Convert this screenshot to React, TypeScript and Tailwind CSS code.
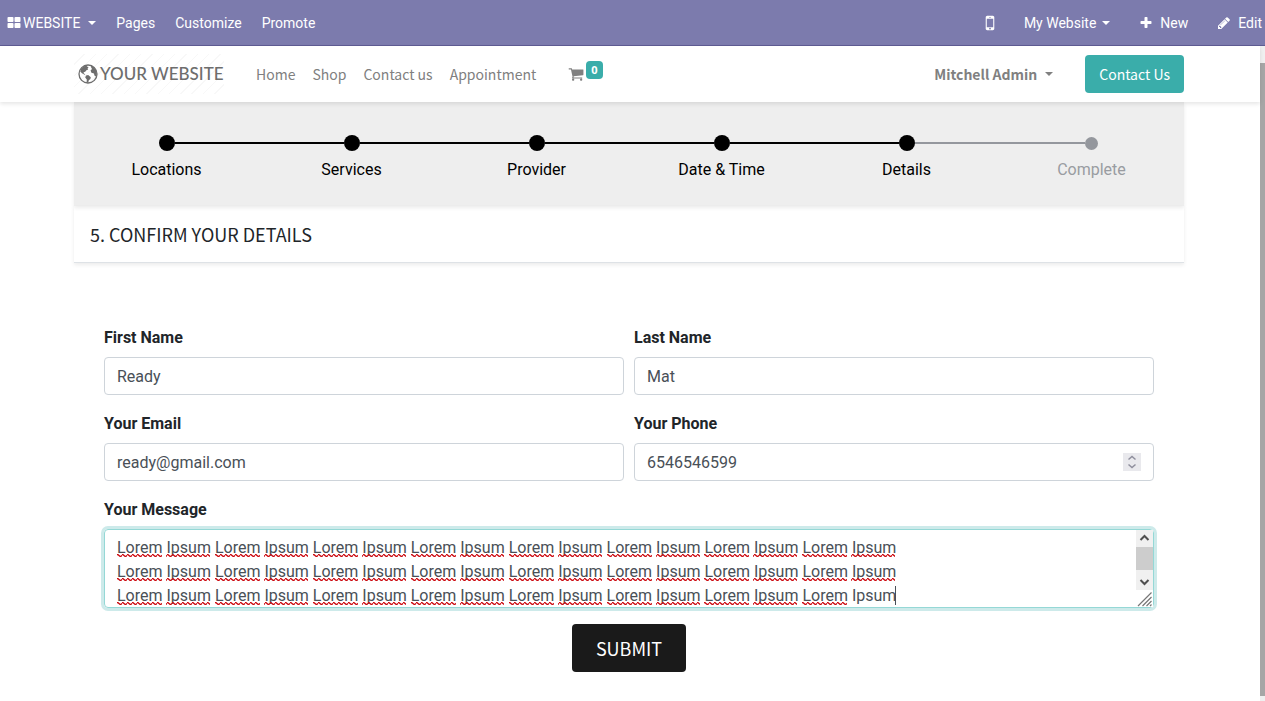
import React from "react";

const Icon = ({ d, className, box = "0 0 1792 1792" }: { d: string; className: string; box?: string }) => (
  <svg aria-hidden="true" viewBox={box} className={className} fill="currentColor">
    <path d={d} />
  </svg>
);

const thLarge =
  "M832 1024v384q0 52-38 90t-90 38h-512q-52 0-90-38t-38-90v-384q0-52 38-90t90-38h512q52 0 90 38t38 90zm0-768v384q0 52-38 90t-90 38h-512q-52 0-90-38t-38-90v-384q0-52 38-90t90-38h512q52 0 90 38t38 90zm896 768v384q0 52-38 90t-90 38h-512q-52 0-90-38t-38-90v-384q0-52 38-90t90-38h512q52 0 90 38t38 90zm0-768v384q0 52-38 90t-90 38h-512q-52 0-90-38t-38-90v-384q0-52 38-90t90-38h512q52 0 90 38t38 90z";
const mobile =
  "M976 1408q0-33-23.5-56.5t-56.5-23.5-56.5 23.5-23.5 56.5 23.5 56.5 56.5 23.5 56.5-23.5 23.5-56.5zm208-160v-704q0-13-9.5-22.5t-22.5-9.5h-512q-13 0-22.5 9.5t-9.5 22.5v704q0 13 9.5 22.5t22.5 9.5h512q13 0 22.5-9.5t9.5-22.5zm-192-848q0-16-16-16h-160q-16 0-16 16t16 16h160q16 0 16-16zm288-16v1024q0 52-38 90t-90 38h-512q-52 0-90-38t-38-90v-1024q0-52 38-90t90-38h512q52 0 90 38t38 90z";
const plus =
  "M1600 736v192q0 40-28 68t-68 28h-416v416q0 40-28 68t-68 28h-192q-40 0-68-28t-28-68v-416h-416q-40 0-68-28t-28-68v-192q0-40 28-68t68-28h416v-416q0-40 28-68t68-28h192q40 0 68 28t28 68v416h416q40 0 68 28t28 68z";
const pencil =
  "M491 1536l91-91-235-235-91 91v107h128v128h107zm523-928q0-22-22-22-10 0-17 7l-542 542q-7 7-7 17 0 22 22 22 10 0 17-7l542-542q7-7 7-17zm-54-192l416 416-832 832h-416v-416zm683 96q0 53-37 90l-166 166-416-416 166-165q36-38 90-38 53 0 91 38l235 234q37 39 37 91z";
const cart =
  "M704 1536q0 52-38 90t-90 38-90-38-38-90 38-90 90-38 90 38 38 90zm896 0q0 52-38 90t-90 38-90-38-38-90 38-90 90-38 90 38 38 90zm128-1088v512q0 24-16.5 42.5t-40.5 21.5l-1044 122q13 60 13 70 0 16-24 64h920q26 0 45 19t19 45-19 45-45 19h-1024q-26 0-45-19t-19-45q0-11 8-31.5t16-36 21.5-40 15.5-29.5l-177-823h-204q-26 0-45-19t-19-45 19-45 45-19h256q16 0 28.5 6.5t19.5 15.5 13 24.5 8 26 5.5 29.5 4.5 26h1201q26 0 45 19t19 45z";

const Caret = () => (
  <svg aria-hidden="true" viewBox="0 0 8 4" className="h-1 w-2" fill="currentColor">
    <path d="M0 0h8L4 4z" />
  </svg>
);

const Globe = () => (
  <svg aria-hidden="true" viewBox="0 0 20 20" className="size-5 shrink-0" fill="currentColor">
    <circle cx="10" cy="10" r="9" fill="none" stroke="currentColor" strokeWidth="1.3" />
    <path d="M3.200 4.600 6 2.200 9.400 1.300 8.800 2.600 10.600 3 9.600 4.400 10.200 5.600 8.400 6.200 7.200 7.800 5.600 8.200 5.800 9.400 7.400 10.200 6.600 10.800 4 9.200 2.200 7.400z" />
    <path d="M12.600 1.600 15.800 3 18.200 6.400 18.900 10 17.800 12.600 16.400 11.400 16 9.400 13.400 8.800 12.600 6.600 14 5 13.200 3.600z" />
    <path d="M8 11.400 10.200 11 12.800 13.200 12.400 15 10.800 16.200 10.200 18.800 8.600 18.400 8.800 15.400 7.200 13.600z" />
  </svg>
);

const steps = ["Locations", "Services", "Provider", "Date & Time", "Details", "Complete"];
const current = 4;

const Stepper = () => (
  <ol className="grid h-26 grid-cols-6 bg-[#eee] pt-[33px] text-base shadow-[0_2px_4px_rgba(0,0,0,0.08)]">
    {steps.map((step, i) => (
      <li key={step} className={i <= current ? "text-black" : "text-[#999ca1]"}>
        <div className="flex h-4 items-center">
          <span className={`h-0.5 flex-1 ${i === 0 ? "" : i <= current ? "bg-black" : "bg-[#94979d]"}`} />
          <span className={i <= current ? "size-4 rounded-full bg-black" : "size-[13px] rounded-full bg-[#94979d]"} />
          <span
            className={`h-0.5 flex-1 ${i === steps.length - 1 ? "" : i < current ? "bg-black" : "bg-[#94979d]"}`}
          />
        </div>
        <div className="mt-[7px] text-center leading-6">{step}</div>
      </li>
    ))}
  </ol>
);

const control =
  "block w-full rounded border border-[#ced4da] bg-white px-3 text-base leading-6 text-[#495057] outline-none";

const Field = ({ id, label, children }: { id: string; label: string; children: React.ReactNode }) => (
  <div>
    <label htmlFor={id} className="mb-[7px] block font-bold leading-6">
      {label}
    </label>
    {children}
  </div>
);

const message = Array(3).fill(Array(8).fill("Lorem Ipsum").join(" ")).join("\n");

const SpellingMarks = () => (
  <svg
    aria-hidden="true"
    className="pointer-events-none absolute left-[13px] top-[25px] h-14 w-[790px]"
  >
    <defs>
      <pattern id="wave" width="5" height="24" patternUnits="userSpaceOnUse">
        <path d="M-1 1.500 0 .7h1L3 2.300h1L6 .7" fill="none" stroke="#cc0a10" strokeWidth="1.300" />
      </pattern>
    </defs>
    {[0, 1, 2].map((line) =>
      Array.from({ length: 8 }, (_, i) => (
        <g key={`${line}-${i}`} transform={`translate(${Math.round(i * 97.9)} ${line * 24})`} fill="url(#wave)">
          <rect width="45" height="3" />
          {!(line === 2 && i === 7) && <rect x="49" width="44" height="3" />}
        </g>
      )),
    )}
  </svg>
);

const TextScroll = () => (
  <div aria-hidden="true" className="absolute right-px top-px flex h-[77px] w-[17px] flex-col bg-white">
    <svg viewBox="0 0 17 17" className="h-[17px] bg-[#f0f0f0]" fill="none" stroke="#505050" strokeWidth="2">
      <path d="m4.500 10 4-4 4 4" />
    </svg>
    <div className="h-[23px] bg-[#cdcdcd]" />
    <svg viewBox="0 0 17 20" className="h-5 bg-[#f0f0f0]" fill="none" stroke="#505050" strokeWidth="2">
      <path d="m4.500 10 4 4 4-4" />
    </svg>
    <svg viewBox="0 0 17 17" className="h-[17px]" fill="none" stroke="#777" strokeWidth="1.2">
      <path d="M2 16 15.500 2.500M6.500 16l9-9M10.500 16l5-5M14 16l1.500-1.500" />
    </svg>
  </div>
);

export default function App() {
  return (
    <div className="flex min-h-screen flex-col bg-white font-['Roboto',sans-serif] text-[#212529]">
      <nav className="flex h-[46px] items-center justify-between border-b border-[#5f5c93] bg-[#7c7bad] pl-[7px] pr-[3px] text-sm text-white">
        <div className="flex items-center gap-5">
          <button className="flex items-center">
            <Icon d={thLarge} className="mr-0.5 h-3.5 w-3.5" />
            WEBSITE
            <span className="ml-2">
              <Caret />
            </span>
          </button>
          <a href="#pages">Pages</a>
          <a href="#customize">Customize</a>
          <a href="#promote">Promote</a>
        </div>
        <div className="flex items-center">
          <button aria-label="Mobile preview" className="mr-6">
            <Icon d={mobile} className="size-5" />
          </button>
          <button className="mr-[29px] flex items-center gap-1.5">
            My Website <Caret />
          </button>
          <button className="mr-[29px] flex items-center gap-[7px]">
            <Icon d={plus} className="size-3.5" /> New
          </button>
          <button className="flex items-center gap-[7px]">
            <Icon d={pencil} className="size-3.5" /> Edit
          </button>
        </div>
      </nav>

      <div className="flex flex-1">
        <div className="min-w-0 flex-1">
          <header className="relative h-14 bg-white pr-0.5 shadow-[0_2px_4px_rgba(0,0,0,0.1)]">
            <div className="mx-auto flex h-full max-w-[1110px] items-center font-['Noto_Sans_CJK_SC',sans-serif] text-sm leading-6 text-[#808080]">
              <a
                href="#home"
                className="mr-8 flex h-10 w-[150px] items-center bg-[repeating-linear-gradient(135deg,#fff_0_7px,#f8f8f8_7px_8px)] pl-1 font-['Lato',sans-serif] text-[17px] font-medium text-[#6d6d6d]"
              >
                <Globe />
                <span className="ml-0.5 whitespace-nowrap">YOUR WEBSITE</span>
              </a>
              <nav className="flex items-center gap-[17px]">
                <a href="#home">Home</a>
                <a href="#shop">Shop</a>
                <a href="#contact">Contact us</a>
                <a href="#appointment">Appointment</a>
              </nav>
              <a href="#cart" aria-label="Cart" className="ml-8 flex items-center gap-0.5">
                <Icon d={cart} className="size-4" />
                <span className="mb-2 rounded bg-[#3aadaa] px-[5px] font-['Open_Sans',sans-serif] text-[11px] font-bold leading-[18px] text-white">
                  0
                </span>
              </a>
              <button className="ml-auto mr-8 flex items-center gap-2 font-bold">
                Mitchell Admin <Caret />
              </button>
              <a href="#contact" className="flex h-[38px] items-center rounded bg-[#3aadaa] px-3.5 text-white">
                Contact Us
              </a>
            </div>
          </header>

          <main className="pr-0.5">
            <div className="mx-auto max-w-[1110px]">
              <Stepper />
              <h1 className="h-[57px] border-b border-[#dee2e6] px-4 font-['Noto_Sans_CJK_SC',sans-serif] text-lg leading-14 shadow-[0_2px_4px_rgba(0,0,0,0.08)]">
                5. CONFIRM YOUR DETAILS
              </h1>
              <form className="px-[30px] pt-[63px]" onSubmit={(e) => e.preventDefault()}>
                <div className="grid grid-cols-2 gap-x-2.5 gap-y-[17px]">
                  <Field id="first" label="First Name">
                    <input id="first" defaultValue="Ready" className={`${control} h-[38px]`} />
                  </Field>
                  <Field id="last" label="Last Name">
                    <input id="last" defaultValue="Mat" className={`${control} h-[38px]`} />
                  </Field>
                  <Field id="email" label="Your Email">
                    <input id="email" type="email" defaultValue="ready@gmail.com" className={`${control} h-[38px]`} />
                  </Field>
                  <Field id="phone" label="Your Phone">
                    <div className="relative">
                      <input id="phone" inputMode="numeric" defaultValue="6546546599" className={`${control} h-[38px]`} />
                      <svg
                        aria-hidden="true"
                        viewBox="0 0 18 18"
                        className="absolute right-[13px] top-2.5 size-[18px] bg-[#e9e9ed]"
                        fill="none"
                        stroke="#8f8f9d"
                        strokeWidth="1.5"
                      >
                        <path d="m5.500 6.500 3.500-3 3.500 3M5.500 11.500l3.500 3 3.500-3" />
                      </svg>
                    </div>
                  </Field>
                  <div className="col-span-2">
                    <Field id="message" label="Your Message">
                      <div className="relative">
                        <textarea
                          id="message"
                          spellCheck={false}
                          defaultValue={message}
                          className="block h-[79px] w-full resize-none overflow-hidden rounded border border-[#95d8d6] px-3 py-1.5 text-base leading-6 text-[#495057] shadow-[0_0_0_3px_#cdeaea] outline-none"
                        />
                        <SpellingMarks />
                        <span aria-hidden="true" className="absolute left-[791px] top-[57px] h-[19px] w-px bg-[#495057]" />
                        <TextScroll />
                      </div>
                    </Field>
                  </div>
                </div>
                <div className="mt-4 flex justify-center">
                  <button className="h-12 rounded bg-[#1a1a1a] px-6 font-['Noto_Sans_CJK_SC',sans-serif] text-lg text-white">
                    SUBMIT
                  </button>
                </div>
              </form>
            </div>
          </main>
        </div>
        <div aria-hidden="true" className="flex w-[5px] flex-col bg-[#f0f0f0] pb-[5px] pt-[17px]">
          <div className="flex-1 bg-[#a6a6a6]" />
        </div>
      </div>
    </div>
  );
}
